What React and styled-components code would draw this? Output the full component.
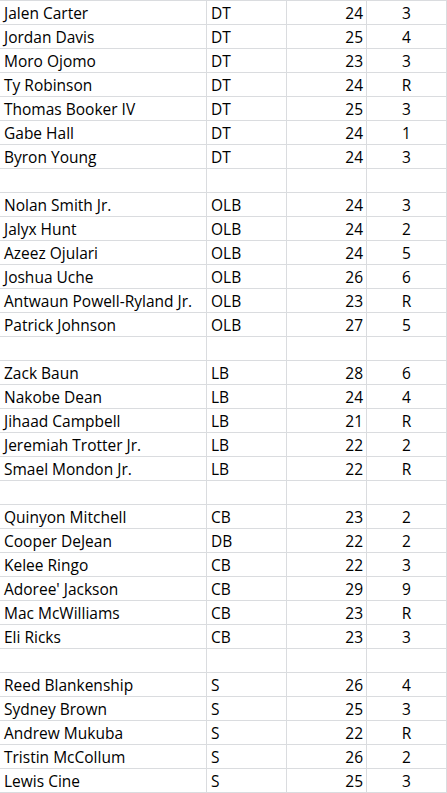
import React from 'react';
import styled, {createGlobalStyle} from "styled-components";

const GlobalStyle = createGlobalStyle`
    html, body {
        margin: 0;
        padding: 0;
        background: #ffffff;
    }
    body {
        font-family: "Open Sans", "Liberation Sans", Arial, sans-serif;
        color: #000000;
    }
`;

const roster = [
    [['Jalen Carter', 'DT', 24, '3'], ['Jordan Davis', 'DT', 25, '4'], ['Moro Ojomo', 'DT', 23, '3'],
     ['Ty Robinson', 'DT', 24, 'R'], ['Thomas Booker IV', 'DT', 25, '3'], ['Gabe Hall', 'DT', 24, '1'],
     ['Byron Young', 'DT', 24, '3']],
    [['Nolan Smith Jr.', 'OLB', 24, '3'], ['Jalyx Hunt', 'OLB', 24, '2'], ['Azeez Ojulari', 'OLB', 24, '5'],
     ['Joshua Uche', 'OLB', 26, '6'], ['Antwaun Powell-Ryland Jr.', 'OLB', 23, 'R'], ['Patrick Johnson', 'OLB', 27, '5']],
    [['Zack Baun', 'LB', 28, '6'], ['Nakobe Dean', 'LB', 24, '4'], ['Jihaad Campbell', 'LB', 21, 'R'],
     ['Jeremiah Trotter Jr.', 'LB', 22, '2'], ['Smael Mondon Jr.', 'LB', 22, 'R']],
    [['Quinyon Mitchell', 'CB', 23, '2'], ['Cooper DeJean', 'DB', 22, '2'], ['Kelee Ringo', 'CB', 22, '3'],
     ["Adoree' Jackson", 'CB', 29, '9'], ['Mac McWilliams', 'CB', 23, 'R'], ['Eli Ricks', 'CB', 23, '3']],
    [['Reed Blankenship', 'S', 26, '4'], ['Sydney Brown', 'S', 25, '3'], ['Andrew Mukuba', 'S', 22, 'R'],
     ['Tristin McCollum', 'S', 26, '2'], ['Lewis Cine', 'S', 25, '3']],
];

function App() {
    const rows = [];
    roster.forEach((group, gi) => {
        if (gi > 0) rows.push(null);
        group.forEach((p) => rows.push(p));
    });

    return (
        <>
            <GlobalStyle />
            <Sheet>
                {rows.map((r, i) => (
                    <Row key={i}>
                        <Cell>{r ? r[0] : ''}</Cell>
                        <Cell>{r ? r[1] : ''}</Cell>
                        <Cell align="right">{r ? r[2] : ''}</Cell>
                        <Cell align="center">{r ? r[3] : ''}</Cell>
                    </Row>
                ))}
            </Sheet>
        </>
    )
}

const Sheet = styled.div`
    width: 447px;
    border-top: 1px solid #dadcdf;
    display: flex;
    flex-direction: column;
`;

const Row = styled.div`
    display: grid;
    grid-template-columns: 207px 80px 80px 80px;
`;

const Cell = styled.div`
    box-sizing: border-box;
    height: 24px;
    border-right: 1px solid #dadcdf;
    border-bottom: 1px solid #dadcdf;
    padding: 1px ${p => p.align === 'right' ? '3px' : '4px'} 0 4px;
    font-size: 15.5px;
    line-height: 23px;
    white-space: nowrap;
    overflow: hidden;
    text-align: ${p => p.align || 'left'};
`;

export default App;
